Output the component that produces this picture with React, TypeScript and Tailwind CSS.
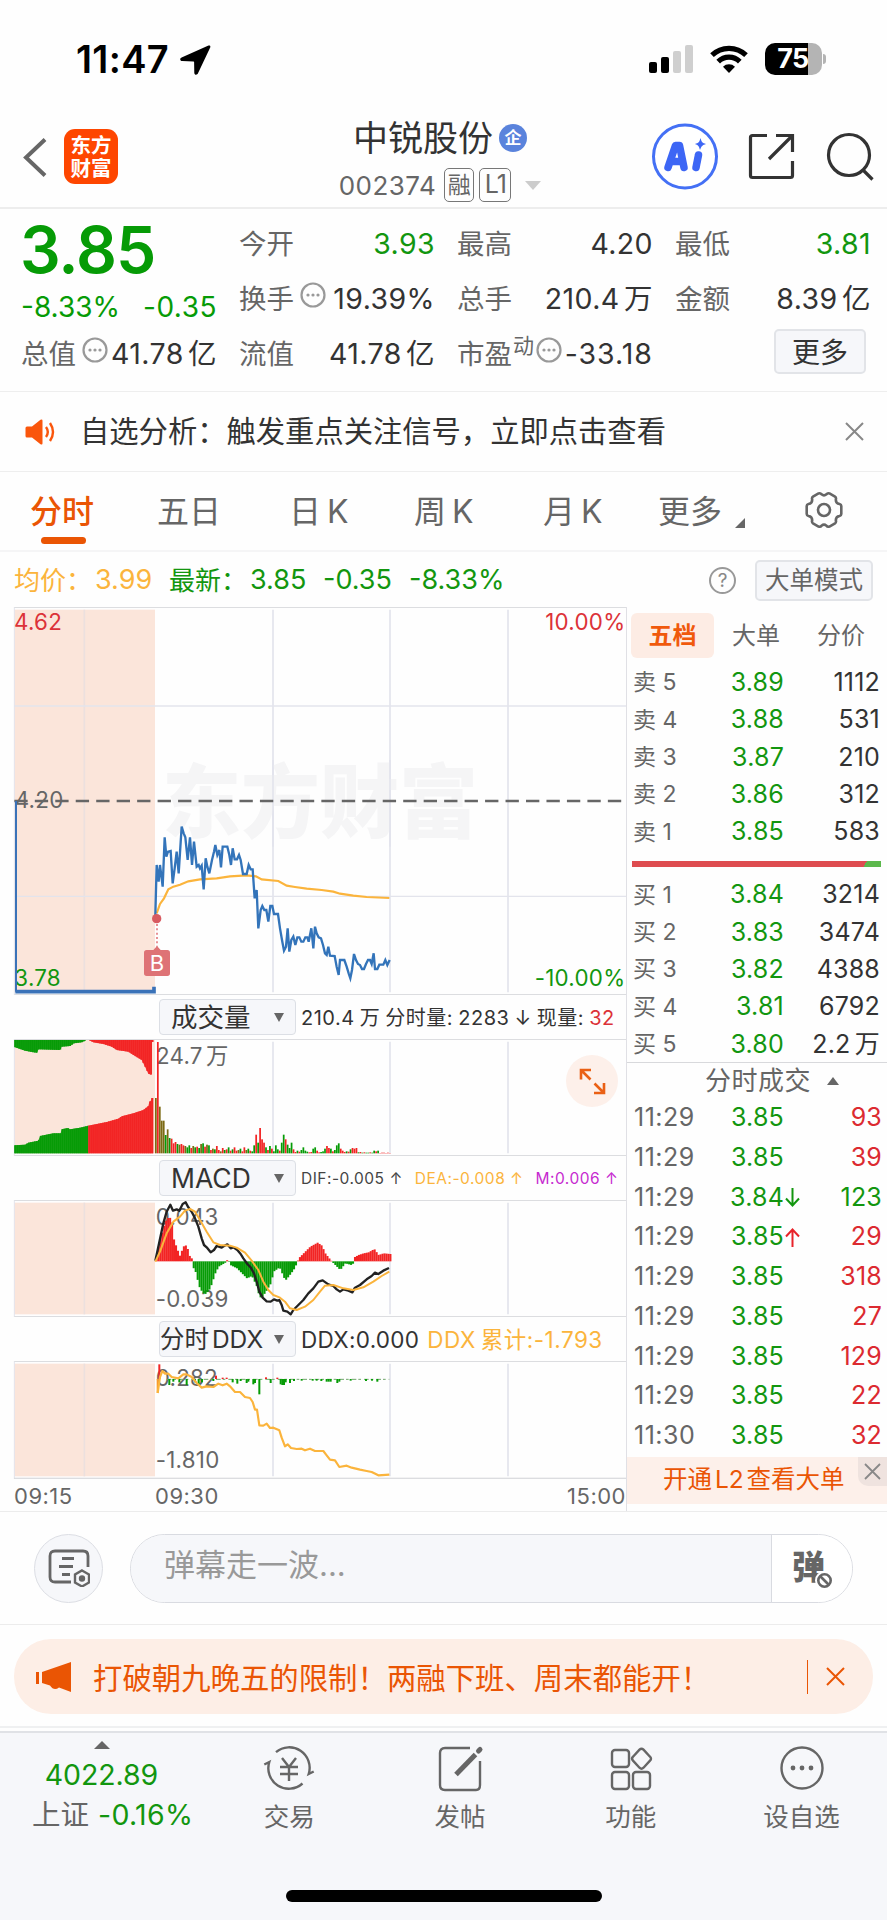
import React from 'react'

type Pt = [number, number]

const GRID = '#e3e4ec'
const RED = '#f22424'
const GREEN = '#069b06'
const ORANGE = '#fbb43c'

const asks = [
  ['卖 5', '3.89', '1112'],
  ['卖 4', '3.88', '531'],
  ['卖 3', '3.87', '210'],
  ['卖 2', '3.86', '312'],
  ['卖 1', '3.85', '583'],
]

const bids = [
  ['买 1', '3.84', '3214'],
  ['买 2', '3.83', '3474'],
  ['买 3', '3.82', '4388'],
  ['买 4', '3.81', '6792'],
  ['买 5', '3.80', '2.2 万'],
]

const trades = [
  { time: '11:29', price: '3.85', qty: '93' },
  { time: '11:29', price: '3.85', qty: '39' },
  { time: '11:29', price: '3.84', qty: '123', dir: 'down' },
  { time: '11:29', price: '3.85', qty: '29', dir: 'up' },
  { time: '11:29', price: '3.85', qty: '318' },
  { time: '11:29', price: '3.85', qty: '27' },
  { time: '11:29', price: '3.85', qty: '129' },
  { time: '11:29', price: '3.85', qty: '22' },
  { time: '11:30', price: '3.85', qty: '32' },
]

const pricePoints =
  '466,945 470,795 476,845 480,795 488,860 494,712 499,770 504,755 512,753 518,850 524,805 530,755 536,820 545,680 551,700 556,712 563,780 570,712 576,795 582,725 590,800 596,795 600,805 605,797 611,868 617,775 622,800 628,820 636,780 642,755 646,735 652,765 658,750 663,802 668,740 682,740 688,765 693,795 698,745 704,778 711,778 717,765 722,780 729,822 740,822 746,795 752,808 758,808 764,895 770,870 775,985 782,930 787,918 793,930 799,930 805,965 811,918 817,918 822,942 834,942 840,985 846,1020 852,1052 858,1040 863,985 868,1055 874,1020 880,1010 886,1035 892,1012 898,1012 904,1025 910,1025 916,1012 922,1012 926,1025 934,985 940,1045 945,980 950,1000 956,1012 963,1015 969,1035 975,1060 980,1065 985,1040 990,1067 1004,1068 1010,1100 1016,1125 1020,1080 1033,1080 1040,1100 1046,1120 1051,1135 1056,1110 1062,1062 1068,1080 1074,1092 1080,1095 1086,1107 1092,1107 1098,1092 1104,1080 1110,1080 1115,1092 1121,1060 1125,1107 1132,1107 1138,1094 1150,1094 1156,1080 1162,1095 1169,1080'
const avgPoints =
  '470,940 480,912 492,895 505,868 520,860 540,854 565,844 600,838 650,835 690,829 740,826 768,829 785,838 835,843 860,857 885,861 920,866 965,870 1000,875 1020,881 1060,887 1100,891 1168,894'
const difPoints =
  '466,782 475,740 490,670 500,635 511,614 519,632 530,628 538,632 548,612 557,607 565,622 575,635 585,655 595,680 605,715 612,735 620,742 632,757 642,750 650,738 665,743 672,738 682,733 692,745 700,742 712,750 722,762 730,775 742,792 752,802 762,820 770,845 778,875 788,893 800,904 812,905 822,898 832,902 838,900 845,915 850,932 862,935 872,943 880,930 895,915 910,900 925,880 940,865 955,845 968,841 985,853 1000,858 1010,868 1020,875 1030,868 1045,872 1057,877 1065,863 1080,855 1100,838 1115,828 1125,818 1135,822 1150,812 1167,804'
const deaPoints =
  '466,785 480,755 500,700 520,665 540,650 555,632 570,627 585,635 600,660 620,695 640,727 660,735 690,737 710,743 735,758 755,782 775,810 790,845 805,870 820,885 840,893 855,905 870,925 890,930 915,920 940,900 960,875 975,857 1000,855 1030,865 1060,870 1090,862 1120,845 1145,828 1168,815'
const ddxPoints =
  '473,428 480,380 487,362 495,370 505,370 515,380 535,384 550,372 560,372 575,380 590,398 605,412 620,408 640,410 655,400 668,405 680,400 690,408 705,425 720,425 735,440 750,443 758,455 765,478 771,478 778,525 790,526 800,520 810,533 820,532 838,540 845,562 855,588 863,582 873,593 890,596 905,595 915,600 930,595 945,602 970,602 980,615 990,628 1005,630 1018,650 1040,646 1055,652 1080,658 1100,662 1115,665 1135,675 1168,673'

// opening auction depth, before 09:30
const depthTopGreen: Pt[] = [[43, 141], [75, 152], [100, 157], [110, 158], [116, 148], [180, 150], [185, 140], [210, 138], [222, 130], [245, 127], [258, 121]]
const depthTopRed: Pt[] = [[268, 121], [280, 127], [310, 132], [335, 140], [350, 150], [385, 155], [400, 165], [425, 180], [435, 200], [445, 221], [453, 224], [454, 126], [460, 126]]
const depthLowGreen: Pt[] = [[43, 436], [75, 434], [85, 428], [115, 422], [120, 408], [160, 400], [182, 400], [185, 388], [203, 384], [210, 388], [240, 383], [265, 377]]
const depthLowRed: Pt[] = [[265, 377], [320, 366], [355, 356], [365, 349], [400, 340], [430, 330], [445, 318], [448, 305], [452, 303], [455, 294], [460, 294]]

const macdHist: Pt[] = [
  [466, 780], [475, 735], [485, 700], [495, 665], [505, 652], [513, 655], [520, 715], [530, 745], [540, 770], [548, 740], [560, 735], [566, 765], [575, 776],
  [577, 800], [585, 812], [597, 860], [608, 880], [617, 882], [630, 865], [645, 820], [655, 800], [675, 788], [683, 777], [690, 795], [710, 805], [725, 820],
  [740, 835], [755, 828], [770, 860], [778, 893], [787, 890], [800, 870], [812, 850], [820, 815], [838, 802], [855, 842], [865, 830], [880, 810], [890, 790],
  [895, 775], [910, 760], [930, 740], [952, 728], [965, 737], [975, 760], [990, 779], [1000, 790], [1020, 810], [1035, 790], [1057, 796], [1062, 772],
  [1075, 765], [1090, 760], [1105, 757], [1122, 747], [1135, 765], [1150, 760], [1170, 762],
]

const volumes = [
  166, 334, 140, 98, 98, 55, 72, 46, 44, 30, 34, 28, 26, 28, 24, 22, 18, 24, 16, 22, 18, 20, 16, 28, 30, 20, 26, 24, 10, 14, 12, 22, 10, 6, 16, 10, 12, 18, 8, 12,
  18, 8, 10, 14, 6, 18, 10, 14, 8, 6, 24, 56, 32, 76, 42, 32, 18, 10, 22, 14, 6, 24, 12, 8, 32, 56, 42, 26, 16, 32, 12, 4, 8, 5, 10, 18, 8, 5, 3, 4,
  14, 18, 8, 3, 4, 6, 14, 22, 16, 14, 6, 10, 24, 30, 14, 8, 4, 6, 5, 12, 16, 14, 16, 3, 4, 2, 3, 2, 2, 3, 2, 8, 6, 8, 1, 2, 2, 1, 2, 1,
]
const volumeColors = 'orooogogrrrgorroggrogrgogrogrogrrorgrgrgrrogrrogrggrgrrrgrgrgggrggrgggrrgrggggrrggrrgggrrgrgggrrrgrgrrrgrgrggrggrgrrrr'

const ddxBars: [number, number, string][] = [
  [478, 342, RED], [473, 428, '#fb9a2c'], [508, 404, GREEN], [520, 394, GREEN], [538, 396, GREEN], [560, 404, GREEN], [585, 396, GREEN], [596, 404, GREEN],
  [606, 396, GREEN], [640, 392, GREEN], [648, 376, RED], [668, 382, RED], [680, 382, RED], [698, 396, GREEN], [712, 400, GREEN], [722, 392, GREEN],
  [740, 398, GREEN], [745, 394, GREEN], [760, 402, GREEN], [765, 398, GREEN], [778, 432, GREEN], [798, 381, RED], [812, 398, GREEN], [832, 382, RED],
  [842, 402, GREEN], [847, 404, GREEN], [852, 404, GREEN], [857, 396, GREEN], [870, 398, GREEN], [882, 392, GREEN], [905, 391, GREEN], [938, 391, GREEN],
  [950, 391, GREEN], [964, 392, GREEN], [980, 394, GREEN], [986, 394, GREEN], [992, 394, GREEN], [1012, 398, GREEN], [1018, 394, GREEN], [1052, 391, GREEN],
  [1098, 392, GREEN], [1116, 391, GREEN], [1132, 394, GREEN],
]

function valueAt(pts: Pt[], x: number) {
  for (let i = 1; i < pts.length; i++) {
    const [x0, y0] = pts[i - 1]
    const [x1, y1] = pts[i]
    if (x <= x1) return y0 + ((y1 - y0) * Math.max(0, x - x0)) / (x1 - x0)
  }
  return pts[pts.length - 1][1]
}

function DepthBars({ pts, base, color }: { pts: Pt[]; base: number; color: string }) {
  const start = pts[0][0]
  const end = pts[pts.length - 1][0]
  const step = 5.9
  const xs = Array.from({ length: Math.ceil((end - start) / step) }, (_, i) => start + i * step)
  return (
    <g fill={color}>
      <polygon points={`${start},${base} ${pts.map((p) => p.join(',')).join(' ')} ${end},${base}`} opacity={0.88} />
      {xs.map((x) => {
        const y = valueAt(pts, x + 2)
        return <rect key={x} x={x} y={Math.min(y, base)} width={Math.min(5, end - x)} height={Math.abs(base - y)} />
      })}
    </g>
  )
}

// All charts share one horizontal scale: three units to a pixel
function ChartFrame({ top, bottom, children }: { top: number; bottom: number; children: React.ReactNode }) {
  const innerBottom = bottom - 8
  return (
    <>
      <rect x={43} y={top + 8} width={422} height={innerBottom - top - 8} fill="#fbe5da" />
      <g stroke={GRID} strokeWidth={5}>
        <line x1={253} x2={253} y1={top + 8} y2={innerBottom} stroke="#ece0de" />
        <line x1={819} x2={819} y1={top + 8} y2={innerBottom} />
        <line x1={1170} x2={1170} y1={top + 8} y2={innerBottom} />
        <line x1={1524} x2={1524} y1={top + 8} y2={innerBottom} />
        <line x1={43} x2={43} y1={top} y2={bottom} strokeWidth={3} />
      </g>
      {children}
      <line x1={43} x2={1878} y1={top + 1.5} y2={top + 1.5} stroke="#dcdde0" strokeWidth={3} />
      <line x1={43} x2={1878} y1={bottom - 1.5} y2={bottom - 1.5} stroke="#dcdde0" strokeWidth={3} />
    </>
  )
}

const svgFont = "Inter, 'Noto Sans CJK SC', sans-serif"

function PriceChart() {
  return (
    <svg className="block h-[388px] w-[626px]" viewBox="0 21 1878 1164" fontFamily={svgFont}>
      <ChartFrame top={21} bottom={1185}>
        <text x={486} y={694} fontSize={240} fontWeight={900} fill="#f5f5f6" textLength={948} lengthAdjust="spacingAndGlyphs">
          东方财富
        </text>
        <g stroke={GRID} strokeWidth={5}>
          <line x1={43} x2={1878} y1={318} y2={318} />
          <line x1={43} x2={1878} y1={889} y2={889} strokeWidth={4} />
          <line x1={819} x2={819} y1={480} y2={740} />
          <line x1={1170} x2={1170} y1={480} y2={740} />
        </g>
        <g fontSize={67} letterSpacing={0.8}>
          <text x={42} y={91} fill="#dc3238">4.62</text>
          <text x={44} y={625} fill="#666">4.20</text>
          <text x={43} y={1159} fill="#12960f">3.78</text>
          <text x={1876} y={91} fill="#dc3238" textAnchor="end">10.00%</text>
          <text x={1876} y={1159} fill="#12960f" textAnchor="end">-10.00%</text>
        </g>
        <line x1={43} x2={1866} y1={603} y2={603} stroke="#666" strokeWidth={7} strokeDasharray="40 21.4" />
        <path d="M48 603V1175" stroke="#3a72b8" strokeWidth={6} fill="none" />
        <path d="M46 1175H462V1160" stroke="#3a72b8" strokeWidth={11} fill="none" />
        <polyline points={avgPoints} fill="none" stroke={ORANGE} strokeWidth={6.5} />
        <polyline points={pricePoints} fill="none" stroke="#3374ba" strokeWidth={7} />
        <circle cx={470} cy={956} r={14} fill="#d85a60" />
        <line x1={471} x2={471} y1={972} y2={1040} stroke="#dc5a62" strokeWidth={4} strokeDasharray="6 7" />
        <path d="M460 1050l11-12 11 12h20q8 0 8 8v62q0 8-8 8h-62q-8 0-8-8v-62q0-8 8-8z" fill="#de7376" />
        <text x={471} y={1114} fontSize={66} fill="#fff" textAnchor="middle">B</text>
      </ChartFrame>
    </svg>
  )
}

function VolumeChart() {
  const fill: Record<string, string> = { r: RED, g: GREEN, o: '#7c6a14' }
  return (
    <svg className="block h-[117px] w-[626px]" viewBox="0 117 1878 351" fontFamily={svgFont}>
      <ChartFrame top={117} bottom={468}>
        <rect x={43} y={120} width={422} height={10} fill="#fbe5da" />
        <DepthBars pts={depthTopGreen} base={120} color={GREEN} />
        <DepthBars pts={depthTopRed} base={120} color={RED} />
        <DepthBars pts={depthLowGreen} base={460} color={GREEN} />
        <DepthBars pts={depthLowRed} base={460} color={RED} />
        <text x={468} y={192} fontSize={67} wordSpacing={-10} letterSpacing={0.8} fill="#666">24.7 万</text>
        {volumes.map((v, i) => (
          <rect key={i} x={465 + i * 5.9} y={460 - v} width={5.2} height={v} fill={fill[volumeColors[i] ?? 'r']} />
        ))}
      </ChartFrame>
    </svg>
  )
}

function MacdChart() {
  const bars = Array.from({ length: 120 }, (_, i) => 466 + i * 5.9)
  return (
    <svg className="block h-[117px] w-[626px]" viewBox="0 600 1878 351" fontFamily={svgFont}>
      <ChartFrame top={600} bottom={951}>
        <text x={467} y={675} fontSize={67} letterSpacing={0.8} fill="#666">0.043</text>
        <text x={467} y={921} fontSize={67} letterSpacing={0.8} fill="#666">-0.039</text>
        {bars.map((x) => {
          const y = valueAt(macdHist, x + 2)
          return <rect key={x} x={x} y={Math.min(y, 784)} width={6.2} height={Math.abs(784 - y)} fill={y < 784 ? RED : GREEN} />
        })}
        <polyline points={difPoints} fill="none" stroke="#222" strokeWidth={7} strokeLinejoin="round" />
        <polyline points={deaPoints} fill="none" stroke={ORANGE} strokeWidth={6} strokeLinejoin="round" />
      </ChartFrame>
    </svg>
  )
}

function DdxChart() {
  return (
    <svg className="block h-[118px] w-[626px]" viewBox="0 332 1878 354" fontFamily={svgFont}>
      <ChartFrame top={332} bottom={686}>
        <text x={467} y={408} fontSize={67} letterSpacing={0.8} fill="#666">0.282</text>
        <text x={467} y={654} fontSize={67} letterSpacing={0.8} fill="#666">-1.810</text>
        <line x1={500} x2={1168} y1={387} y2={387} stroke="#6fa56a" strokeWidth={3} strokeDasharray="14 6 8 9" />
        {ddxBars.map(([x, y, color]) => (
          <rect key={x} x={x - 3} y={Math.min(y, 386)} width={6} height={Math.abs(386 - y)} fill={color} />
        ))}
        <polyline points={ddxPoints} fill="none" stroke={ORANGE} strokeWidth={6.5} strokeLinejoin="round" />
        <line x1={43} x2={1878} y1={684} y2={684} stroke="#cfd0d3" strokeWidth={4} />
      </ChartFrame>
    </svg>
  )
}

function StatusBar() {
  return (
    <div className="flex h-[104px] pt-[43px] pl-[76px]">
      <span className="w-[104px] text-[38px] leading-[32px] font-semibold tracking-[0.3px] text-black">11:47</span>
      <svg className="mt-[2px] h-[30px] w-[31px]" viewBox="0 0 31 30">
        <path d="M28.5.6 1.6 12.400c-2.200 1-1.600 3.600.6 3.700l11.300.4c.4 0 .6.2.6.6l.2 10.600c.1 2.400 2.700 2.800 3.700.6L30.200 2.500C30.800 1.100 29.800 0 28.500.6z" />
      </svg>
      <div className="ml-[438px] flex h-[30px] items-end gap-[4.500px]">
        <div className="h-[11px] w-[7.500px] rounded-[2px] bg-black" />
        <div className="h-[16px] w-[7.500px] rounded-[2px] bg-black" />
        <div className="h-[22px] w-[7.500px] rounded-[2px] bg-[#cfcfcf]" />
        <div className="h-[28px] w-[7.500px] rounded-[2px] bg-[#cfcfcf]" />
      </div>
      <svg className="mt-[2px] ml-[17px] h-[28px] w-[38px]" viewBox="0 0 38 28">
        <g fill="none" stroke="#000" strokeWidth="5.200">
          <path d="M2 10.200a24.500 24.500 0 0 1 34 0" />
          <path d="M8.200 16.600a15.500 15.500 0 0 1 21.600 0" />
        </g>
        <path d="M19 28l-6-6.200a8.500 8.500 0 0 1 12 0z" />
      </svg>
      <div className="ml-[17px] h-[32px] w-[57px] overflow-hidden rounded-[10px] bg-[linear-gradient(90deg,#000_75%,#b4b4b4_75%)] text-center text-[27px] leading-[32px] font-bold tracking-[-0.5px] text-white">
        75
      </div>
      <div className="mt-[11px] ml-[1.500px] h-[10px] w-[3px] rounded-r-full bg-[#b4b4b4]" />
    </div>
  )
}

function Header() {
  return (
    <div className="flex h-[105px] border-b-2 border-[#ededed]">
      <svg className="mt-[34px] ml-[23px] h-[39px] w-[24px]" viewBox="0 0 24 39" fill="none" stroke="#666" strokeWidth="4">
        <path d="M22 1.500 3 19.500l19 18" />
      </svg>
      <div className="mt-[25px] ml-[17px] flex h-[55px] w-[54px] flex-col items-center justify-center rounded-[11px] bg-[#fe4600] text-[20.500px] leading-[23px] font-bold text-white">
        <span>东方</span>
        <span>财富</span>
      </div>
      <div className="ml-[207px] flex w-[230px] flex-col items-center">
        <div className="mt-[14px] flex h-[40px] items-center gap-[6px] text-[35px] leading-[40px] whitespace-nowrap text-[#333]">
          <span>中锐股份</span>
          <span className="flex size-[28px] items-center justify-center rounded-full bg-[#5a83dc] text-[17px] leading-none font-bold text-white">企</span>
        </div>
        <div className="mt-[9px] flex h-[36px] items-center text-[26px] whitespace-nowrap text-[#666]">
          <span className="tracking-[0.500px]">002374</span>
          <span className="ml-[8px] flex h-[34px] w-[30px] items-center justify-center rounded-[5px] border-[1.500px] border-[#777] text-[23px]">融</span>
          <span className="ml-[5px] flex h-[34px] w-[32px] items-center justify-center rounded-[5px] border-[1.500px] border-[#777] text-[25px] tracking-[-1px]">L1</span>
          <span className="ml-[14px] border-x-[8px] border-t-[9px] border-x-transparent border-t-[#ccc]" />
        </div>
      </div>
      <svg className="mt-[19px] ml-[97px] h-[67px] w-[66px]" viewBox="0 0 66 67">
        <circle cx="33" cy="33.500" r="31.500" fill="#fff" stroke="#4470f5" strokeWidth="3" />
        <g stroke="#3d66f5" strokeLinecap="round" strokeLinejoin="round" fill="none">
          <path d="M16 44.500 23.500 22.500h4l4.500 22M20 38.500h9" strokeWidth="7.500" />
          <path d="M46.500 32 44 44.500" strokeWidth="7.500" />
        </g>
        <path d="M48.500 15c1 4 2 5 5.500 6-3.500 1-4.500 2-6 6-1-4-2-5-5-6 3.500-1 4.500-2 5.500-6z" fill="#3d66f5" />
      </svg>
      <svg className="mt-[28px] ml-[30px] h-[49px] w-[47px]" viewBox="0 0 47 49" fill="none" stroke="#333" strokeWidth="3.200">
        <path d="M19 3.500H4.500q-2 0-2 2v38q0 2 2 2h38q2 0 2-2V29M28 3.500h16.500V20M44 4 21 27" />
      </svg>
      <svg className="mt-[28px] ml-[31px] h-[49px] w-[48px]" viewBox="0 0 48 49" fill="none" stroke="#333" strokeWidth="3.200">
        <circle cx="23" cy="23" r="20.500" />
        <path d="M37 38l9.500 9.500" />
      </svg>
    </div>
  )
}

function Bubble() {
  return (
    <svg className="h-[26px] w-[26px]" viewBox="0 0 26 26">
      <circle cx="13" cy="13" r="11.500" fill="none" stroke="#999" strokeWidth="2.200" />
      <g fill="#999">
        <circle cx="8" cy="13" r="1.600" />
        <circle cx="13" cy="13" r="1.600" />
        <circle cx="18" cy="13" r="1.600" />
      </g>
    </svg>
  )
}

function Stat({ label, value, green, bubble, sup }: { label: string; value: string; green?: boolean; bubble?: boolean; sup?: string }) {
  return (
    <div className="flex h-[55px] items-center whitespace-nowrap">
      <span className="text-[27.500px] text-[#666]">{label}</span>
      {sup && <span className="-mt-[18px] ml-[1px] text-[21px] text-[#666]">{sup}</span>}
      {bubble && (
        <span className={sup ? '-mt-[9px] ml-[2px]' : '-mt-[9px] ml-[6px]'}>
          <Bubble />
        </span>
      )}
      <span
        className={`-mr-[1px] ml-auto text-[28.500px] [word-spacing:-4px] ${green ? 'text-[#12960f]' : 'text-[#333]'} ${
          value.startsWith('-') ? 'tracking-[1px]' : 'tracking-[0.4px]'
        }`}
      >
        {value}
      </span>
    </div>
  )
}

function Quote() {
  return (
    <div className="flex h-[183px] gap-[23px] border-b border-[#eee] pt-[8px] pl-[21px]">
      <div className="w-[195px] text-[#069b06]">
        <div className="-ml-[1px] h-[68px] pt-[3px] text-[64px] leading-[60px] font-semibold tracking-[-1px]">3.85</div>
        <div className="flex h-[42px] items-center justify-between pt-[2px] text-[28px]">
          <span>-8.33%</span>
          <span className="-mr-[1px] tracking-[0.5px]">-0.35</span>
        </div>
        <Stat label="总值" value="41.78 亿" bubble />
      </div>
      <div className="w-[195px]">
        <Stat label="今开" value="3.93" green />
        <Stat label="换手" value="19.39%" bubble />
        <Stat label="流值" value="41.78 亿" />
      </div>
      <div className="w-[195px]">
        <Stat label="最高" value="4.20" />
        <Stat label="总手" value="210.4 万" />
        <Stat label="市盈" sup="动" value="-33.18" bubble />
      </div>
      <div className="w-[195px]">
        <Stat label="最低" value="3.81" green />
        <Stat label="金额" value="8.39 亿" />
        <div className="mt-[2px] ml-[99px] flex h-[45px] w-[92px] items-center justify-center rounded-[5px] border-2 border-[#e2e4e8] bg-[#f6f7fa] text-[28px] text-[#333]">
          <span className="mt-[2px]">更多</span>
        </div>
      </div>
    </div>
  )
}

function Notice() {
  return (
    <div className="flex h-[80px] items-center border-b border-[#eee]">
      <svg className="ml-[25px] h-[26px] w-[31px]" viewBox="0 0 31 26">
        <path d="M2 7.500h5L15.500.8q2-1.200 2 1v22.400q0 2.200-2 1L7 18.500H2q-1.500 0-1.500-1.500V9Q.5 7.500 2 7.500z" fill="#fa560c" />
        <path d="M21 8q3.600 5 0 10M25 4q6 9 0 18" fill="none" stroke="#fa560c" strokeWidth="2.400" />
      </svg>
      <span className="ml-[24px] text-[29.300px] whitespace-nowrap text-[#333]">自选分析：触发重点关注信号，立即点击查看</span>
      <svg className="mr-[23px] ml-auto h-[19px] w-[19px]" viewBox="0 0 19 19" stroke="#888" strokeWidth="2">
        <path d="M1 1l17 17M18 1 1 18" />
      </svg>
    </div>
  )
}

function Tabs() {
  return (
    <div className="flex h-[80px] border-b-2 border-[#f5f5f6] text-[32px] leading-[80px] whitespace-nowrap text-[#666]">
      <div className="ml-[30px] flex w-[127px] flex-col text-[#ea5504]">
        <span className="h-[65px] font-medium">分时</span>
        <span className="ml-[11px] h-[7px] w-[45px] rounded-full bg-[#ea5504]" />
      </div>
      <span className="w-[132px]">五日</span>
      <span className="w-[125px] [word-spacing:-3px]">日 K</span>
      <span className="w-[129px] [word-spacing:-3px]">周 K</span>
      <span className="w-[115px] [word-spacing:-3px]">月 K</span>
      <span className="w-[77px]">更多</span>
      <svg className="mt-[46px] h-[10px] w-[10px]" viewBox="0 0 10 10">
        <path d="M10 0v10H0z" fill="#666" />
      </svg>
      <svg className="mt-[19px] ml-[60px] h-[38px] w-[38px]" viewBox="0 0 38 38" fill="none" stroke="#666" strokeWidth="2.600">
        <path d="M13.500 2.500q2-.8 3 .8 2.500 2 5 0 1-1.600 3-.8l5.500 3.200q1.500 1 .8 3 0 3.800 3.700 4.300 1.800.5 1.800 2v8q0 1.500-1.800 2-3.700.5-3.700 4.300.7 2-.8 3l-5.500 3.200q-2 .8-3-.8-2.500-2-5 0-1 1.600-3 .8L8 32.300q-1.500-1-.8-3 0-3.800-3.700-4.300-1.800-.5-1.800-2v-8q0-1.500 1.800-2 3.700-.5 3.700-4.300-.7-2 .8-3z" />
        <circle cx="19" cy="19" r="6" />
      </svg>
    </div>
  )
}

function InfoRow() {
  return (
    <div className="flex h-[55px] items-center pt-[2px] text-[27px] whitespace-nowrap text-[#12960f]">
      <span className="ml-[14px] w-[81px] text-[26px] text-[#fbb43c]">均价：</span>
      <span className="w-[74px] text-[#fbb43c]">3.99</span>
      <span className="w-[81px] text-[26px]">最新：</span>
      <span className="w-[73px]">3.85</span>
      <span className="w-[86px]">-0.35</span>
      <span>-8.33%</span>
      <span className="ml-auto flex size-[27px] items-center justify-center rounded-full border-2 border-[#999] text-[19px] leading-none text-[#888]">?</span>
      <span className="mr-[14px] ml-[19px] flex h-[41px] w-[118px] items-center justify-center rounded-[5px] border-2 border-[#e2e4e8] bg-[#f6f7fa] text-[24.500px] text-[#666]">大单模式</span>
    </div>
  )
}

function IndicatorBar({ name, narrow, children }: { name: string; narrow?: boolean; children: React.ReactNode }) {
  return (
    <div className="flex h-[44px] items-center whitespace-nowrap">
      <div className={`ml-[159px] flex h-[36px] w-[137px] shrink-0 items-center rounded-[4px] border-[1.500px] border-[#dcdfe5] bg-[#f6f7fa] text-[#333] ${narrow ? 'pl-0 text-[24.500px]' : 'pl-[11px] text-[26.500px]'}`}>
        <span className="mt-[1px] [word-spacing:-4px]">{name}</span>
        <span className="mr-[11px] ml-auto border-x-[5.500px] border-t-[9px] border-x-transparent border-t-[#666]" />
      </div>
      <div className="mt-[2px] ml-[5px] flex">{children}</div>
    </div>
  )
}

function Charts() {
  return (
    <div className="relative w-[626px] shrink-0">
      <PriceChart />
      <IndicatorBar name="成交量">
        <span className="text-[20px] tracking-[0.5px] [word-spacing:-1px] text-[#333]">
          210.4 万 分时量: 2283 ↓ 现量: <span className="text-[#dc3238]">32</span>
        </span>
      </IndicatorBar>
      <VolumeChart />
      <IndicatorBar name="MACD">
        <span className="text-[15.500px] tracking-[0.5px] text-[#444]">DIF:-0.005 ↑</span>
        <span className="ml-[12px] text-[15.500px] tracking-[0.5px] text-[#fbb43c]">DEA:-0.008 ↑</span>
        <span className="ml-[12px] text-[15.500px] tracking-[0.5px] text-[#c62ad0]">M:0.006 ↑</span>
      </IndicatorBar>
      <MacdChart />
      <IndicatorBar name="分时 DDX" narrow>
        <span className="text-[22.500px] tracking-[0.3px] text-[#333]">DDX:0.000</span>
        <span className="ml-[8px] text-[22.500px] tracking-[0.5px] [word-spacing:-2px] text-[#fbb43c]">DDX 累计:-1.793</span>
      </IndicatorBar>
      <DdxChart />
      <div className="flex h-[34px] items-center text-[22px] tracking-[0.5px] text-[#666]">
        <span className="ml-[14px] w-[141px]">09:15</span>
        <span>09:30</span>
        <span className="ml-auto">15:00</span>
      </div>
      <div className="absolute top-[448px] left-[566px] flex size-[52px] items-center justify-center rounded-full bg-[#fdf0ea]">
        <svg className="h-[27px] w-[27px]" viewBox="0 0 27 27" fill="none" stroke="#ea6014" strokeWidth="2.600">
          <path d="M2 11.500V2h10M2.500 2.500l9 9M25 15v10H15M24.500 24.500l-9-9" />
        </svg>
      </div>
    </div>
  )
}

function LevelRow({ row }: { row: string[] }) {
  return (
    <div className="flex h-[37.300px] items-center whitespace-nowrap">
      <span className="w-[67px] text-[23px] text-[#666]">{row[0]}</span>
      <span className="w-[84px] text-right text-[25px] tracking-[0.2px] text-[#12960f]">{row[1]}</span>
      <span className="ml-auto text-[25px] tracking-[0.2px] [word-spacing:-3px] text-[#333]">{row[2]}</span>
    </div>
  )
}

function OrderBook() {
  return (
    <div className="flex w-[261px] flex-col border-l border-[#e0e0e5]">
      <div className="mt-[6px] flex h-[45px] items-center pl-[4px] text-[24px]">
        <span className="flex h-[45px] w-[83px] items-center justify-center rounded-[6px] bg-[#fdece4] font-bold text-[#f0590c]">五档</span>
        <span className="w-[84px] text-center text-[#666]">大单</span>
        <span className="w-[86px] text-center text-[#666]">分价</span>
      </div>
      <div className="mt-[6px] pr-[7px] pl-[6px]">
        {asks.map((row) => (
          <LevelRow key={row[0]} row={row} />
        ))}
      </div>
      <div className="mt-[11px] ml-[5px] h-[6px] w-[249px] bg-[linear-gradient(120deg,#de4c50_93%,#5cb84c_93%)]" />
      <div className="mt-[9px] pr-[7px] pl-[6px]">
        {bids.map((row) => (
          <LevelRow key={row[0]} row={row} />
        ))}
      </div>
      <div className="-mt-[1px] flex h-[37px] items-center border-t border-[#d8d9dc] pl-[78px] text-[26px] text-[#666]">
        <span className="tracking-[0.5px]">分时成交</span>
        <span className="ml-[16px] border-x-[6px] border-b-[8px] border-x-transparent border-b-[#666]" />
      </div>
      <div className="-mt-[1px] pr-[5px] pl-[7px] text-[25px]">
        {trades.map((t, i) => (
          <div key={i} className="flex h-[39.750px] items-center whitespace-nowrap">
            <span className="w-[66px] tracking-[0.5px] text-[#666]">{t.time}</span>
            <span className="w-[84px] text-right tracking-[0.2px] text-[#12960f]">{t.price}</span>
            {t.dir && (
              <svg className={`ml-[1px] h-[19px] w-[15px] ${t.dir === 'up' ? 'text-[#e8232a]' : 'rotate-180 text-[#12960f]'}`} viewBox="0 0 15 19" fill="none" stroke="currentColor" strokeWidth="2">
                <path d="M7.500 19V2M1 8.500l6.500-7 6.500 7" />
              </svg>
            )}
            <span className={`ml-auto tracking-[0.2px] ${t.dir === 'down' ? 'text-[#12960f]' : 'text-[#dc2a30]'}`}>{t.qty}</span>
          </div>
        ))}
      </div>
      <div className="relative mt-[1px] flex h-[47px] items-center bg-[#fdf0ea] pb-[2px] pl-[36px] text-[24.500px] whitespace-nowrap [word-spacing:-4px] text-[#ea5504]">
        开通 L2 查看大单
        <span className="absolute top-0 right-0 flex h-[29px] w-[29px] items-center justify-center rounded-bl-[10px] bg-[#efe3df]">
          <svg className="h-[17px] w-[17px]" viewBox="0 0 17 17" stroke="#888" strokeWidth="1.800">
            <path d="M1 1l15 15M16 1 1 16" />
          </svg>
        </span>
      </div>
    </div>
  )
}

function Danmu() {
  return (
    <div className="flex h-[114px] items-center border-y border-[#ececec]">
      <div className="ml-[34px] flex size-[69px] items-center justify-center rounded-full border-[1.500px] border-[#dcdee4] bg-[#f6f7fa]">
        <svg className="h-[38px] w-[42px]" viewBox="0 0 42 38" fill="none" stroke="#666" strokeWidth="2.800">
          <path d="M23 33H7q-5 0-5-5V7q0-5 5-5h28q5 0 5 5v11M14 9.500h12M11 17.500h14M14 25.500h8" />
          <path d="M34 21.500l7 4v8l-7 4-7-4v-8z" strokeWidth="2.400" />
          <circle cx="34" cy="29.500" r="1.800" fill="#666" />
        </svg>
      </div>
      <div className="ml-[27px] flex h-[69px] w-[723px] overflow-hidden rounded-full border-[1.500px] border-[#d9dbe1]">
        <span className="flex flex-1 items-center bg-[#f6f7fa] pb-[5px] pl-[33px] text-[31px] text-[#999]">弹幕走一波...</span>
        <span className="relative flex w-[81px] items-center border-l-[1.500px] border-[#d9dbe1] bg-white pl-[20px] text-[33px] font-black text-[#666]">
          弹
          <svg className="absolute top-[36px] left-[43px] h-[19px] w-[19px]" viewBox="0 0 19 19">
            <circle cx="9.500" cy="9.500" r="9.500" fill="#fff" />
            <circle cx="9.500" cy="9.500" r="6.200" fill="none" stroke="#666" strokeWidth="2.600" />
            <path d="M5 5l9 9" stroke="#666" strokeWidth="2.600" />
          </svg>
        </span>
      </div>
    </div>
  )
}

function Promo() {
  return (
    <div className="h-[103px] border-b-2 border-[#eff0f1] pt-[14px]">
      <div className="mx-[14px] flex h-[75px] items-center rounded-[37px] bg-[#fdeee6] text-[#ea5504]">
        <svg className="ml-[22px] h-[30px] w-[36px]" viewBox="0 0 36 30" fill="#ea5504">
          <path d="M0 10h3v12H0zM6 10 35 0v30l-12-4.500q-5 4-9-2L6 21z" />
        </svg>
        <span className="mt-[5px] ml-[21px] text-[29.400px] whitespace-nowrap">打破朝九晚五的限制！两融下班、周末都能开！</span>
        <span className="ml-auto h-[34px] w-[1.500px] bg-[#ea5504]" />
        <svg className="mr-[28px] ml-[18px] h-[19px] w-[19px]" viewBox="0 0 19 19" stroke="#ea5504" strokeWidth="2">
          <path d="M1 1l17 17M18 1 1 18" />
        </svg>
      </div>
    </div>
  )
}

function NavItem({ label, children }: { label: string; children: React.ReactNode }) {
  return (
    <div className="flex w-[171px] flex-col items-center">
      <svg className="mt-[11px] h-[48px] w-[52px]" viewBox="0 0 52 48" fill="none" stroke="#666" strokeWidth="2.400">
        {children}
      </svg>
      <span className="mt-[8px] text-[25.500px] leading-[34px] text-[#666]">{label}</span>
    </div>
  )
}

function BottomNav() {
  return (
    <div className="mt-[3px] h-[189px] border-t-[2px] border-[#e0e2e6] bg-[#f6f7fa]">
      <div className="flex h-[157px]">
        <div className="flex w-[204px] flex-col items-center pl-[23px] text-[28.500px] text-[#12960f]">
          <span className="mt-[8px] mr-[22px] border-x-[8px] border-b-[8px] border-x-transparent border-b-[#666]" />
          <span className="mt-[8px] mr-[24px] leading-[36px] tracking-[-0.1px]">4022.89</span>
          <span className="mt-[4px] flex gap-[9px] self-start pl-[9px] leading-[36px] whitespace-nowrap">
            <span className="text-[28.500px] text-[#666]">上证</span>
            <span className="tracking-[0.3px]">-0.16%</span>
          </span>
        </div>
        <NavItem label="交易">
          <path d="M13 8.100A20.500 20.500 0 0 1 45.700 30l5-2.500M39.500 39.500A20.500 20.500 0 0 1 6.300 18l-5 2.500" />
          <path d="M19 14l7 9 7-9M17 23h18M17 30h18M26 23v14" />
        </NavItem>
        <NavItem label="发帖">
          <path d="M36 4H11q-5 0-5 5v32q0 5 5 5h31q4 0 4-5V17" />
          <path d="M41.500 10.500 22 30.500" strokeWidth="5" />
          <path d="M46 5.500l-1.500 1.500" strokeWidth="5" strokeLinecap="round" />
        </NavItem>
        <NavItem label="功能">
          <rect x="7" y="6" width="17" height="17" rx="3" />
          <rect x="7" y="28" width="17" height="17" rx="3" />
          <rect x="28" y="28" width="17" height="17" rx="3" />
          <path d="M34.500 5.700q2-2 4 0l6.500 7q2 2 0 4l-6.500 7q-2 2-4 0l-6.500-7q-2-2 0-4z" />
        </NavItem>
        <NavItem label="设自选">
          <circle cx="26" cy="24" r="20.500" />
          <g fill="#666" stroke="none">
            <circle cx="17" cy="24" r="2.400" />
            <circle cx="26" cy="24" r="2.400" />
            <circle cx="35" cy="24" r="2.400" />
          </g>
        </NavItem>
      </div>
      <div className="mx-auto h-[12px] w-[316px] rounded-full bg-black" />
    </div>
  )
}

export default function App() {
  return (
    <div className="h-[1920px] w-[887px] overflow-hidden bg-[#fefefe] font-[Inter,'Noto_Sans_CJK_SC',sans-serif]">
      <StatusBar />
      <Header />
      <Quote />
      <Notice />
      <Tabs />
      <InfoRow />
      <div className="flex h-[904px]">
        <Charts />
        <OrderBook />
      </div>
      <Danmu />
      <Promo />
      <BottomNav />
    </div>
  )
}
